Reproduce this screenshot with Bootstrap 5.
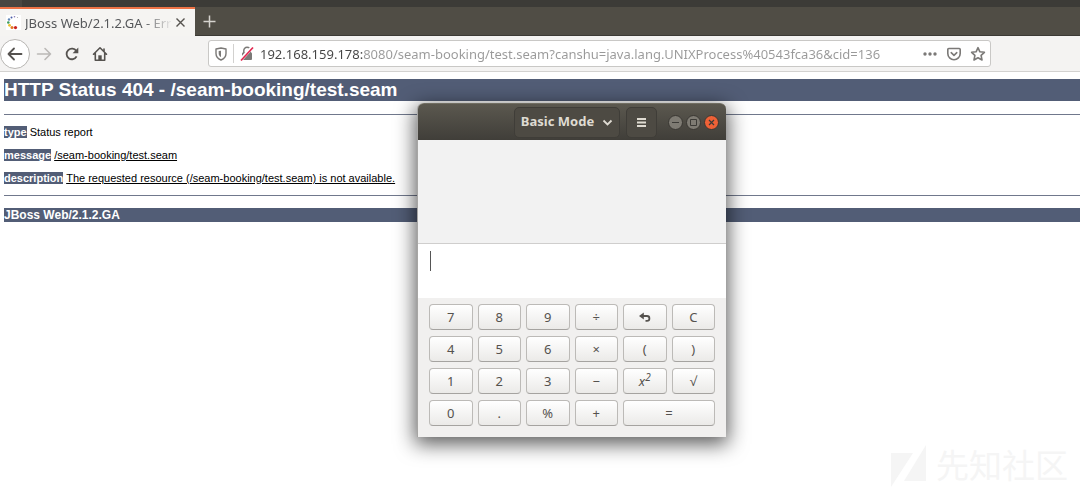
<!DOCTYPE html>
<html lang="en">
<head>
<meta charset="utf-8">
<meta name="viewport" content="width=device-width, initial-scale=1">
<title>JBoss Web/2.1.2.GA - Error report</title>
<link href="https://cdn.jsdelivr.net/npm/bootstrap@5.3.0/dist/css/bootstrap.min.css" rel="stylesheet">
<style>
  body { background: #fff; font-family: "Noto Sans", "Open Sans", sans-serif; font-size: 13px; overflow-x: hidden; min-height: 100vh; }
  svg { display: block; flex: none; }
  button { padding: 0; border: 0; background: none; color: inherit; display: flex; align-items: center; justify-content: center; }

  .topbar { height: 7px; background: linear-gradient(90deg, #484641 22px, #3c3b37 22px); }
  .tabstrip { height: 29px; background: #504d45; border-bottom: 1px solid #3c3a35; }
  .page-tab { width: 195px; height: 29px; background: #f5f4f2; border-top: 2px solid #ee7346; padding: 0 9px 0 6px; color: #55575a; line-height: 20px; }
  .tab-title { white-space: nowrap; -webkit-mask-image: linear-gradient(90deg, #000 118px, transparent 148px); mask-image: linear-gradient(90deg, #000 118px, transparent 148px); }
  .new-tab { width: 29px; color: #d5d3ce; }

  .toolbar { height: 36px; background: #f4f3f2; border-bottom: 1px solid #d3d2d0; color: #55524f; }
  .back { width: 30px; height: 30px; border: 1px solid #b8b6b3; border-radius: 50%; background: #fff; }
  .tool { width: 28px; height: 28px; }
  .address { width: 72.5%; height: 27px; margin-left: 94px; background: #fff; border: 1px solid #c9c8c6; border-radius: 3px; color: #7b7977; }
  .split { width: 1px; height: 19px; background: #d2d1cf; }
  .url { border: 0; outline: 0; padding: 0; min-width: 0; height: 20px; color: #999; font-size: 13px;
    background: linear-gradient(90deg, #444 103px, #999 103px); -webkit-background-clip: text; background-clip: text; -webkit-text-fill-color: transparent; }

  .report { font-family: "Liberation Sans", Arial, sans-serif; font-size: 11px; line-height: 12px; color: #000; padding: 7px 0 0 4px; }
  .report h1, .report h2, .report b { color: #fff; background: #525d76; font-weight: 700; }
  .report h1 { font-size: 19px; line-height: 22px; margin: 0 0 13px; }
  .report h2 { font-size: 12px; line-height: 14px; margin: 0; }
  .report hr { margin: 0 0 11px; border: 0; height: 1px; background: #70788c; opacity: 1; }
  .report p { margin: 0 0 11px; }
  .report .last-rule { margin-bottom: 12px; }

  .calc { position: absolute; left: 417px; top: 103px; width: 309px; border-radius: 6px 6px 0 0; background: #f1f0ef; border: solid #a7a6a4; border-width: 0 0 0 1px; box-shadow: 0 5px 20px 2px rgba(0,0,0,.65); }
  .calc-head { height: 37px; padding-right: 7px; background: linear-gradient(#5b584f, #403e39); border-top: 1px solid #716e62; border-radius: 6px 6px 0 0; color: #dfdbd2; }
  .calc-head .mode, .calc-head .menu { height: 31px; border: 1px solid #3f3d38; border-radius: 5px; background: #4d4a43; font-weight: 700; font-size: 13px; }
  .mode { width: 106px; gap: 8px; }
  .menu { width: 31px; margin: 0 11px 0 6px; }
  .window-buttons { gap: 3px; }
  .win { width: 15px; height: 15px; border-radius: 50%; background: #7e7b73; border: 1px solid #393732; color: #3c3b37; }
  .win.close-win { background: #ee6136; }
  .history { height: 104px; background: #f2f2f2; border-bottom: 1px solid #cfcecd; }
  .entry { height: 54px; background: #fff; padding: 7px 12px; }
  .caret { width: 1px; height: 20px; background: #555; }
  .entry input { border: 0; outline: 0; padding: 0; height: 20px; min-width: 0; background: none; }
  .keys { display: grid; grid-template-columns: repeat(6, 1fr); gap: 6px 5px; padding: 6px 11px 11px; }
  .keys button { height: 26px; border: 1px solid #bcbab7; border-bottom-color: #a5a3a0; border-radius: 4px; background: linear-gradient(#fff, #ebeae8); color: #55524e; font-size: 13px; line-height: 20px; }
  .keys sup { font-size: 10px; top: -5px; }
  .keys .wide-key { grid-column: span 2; }

  .watermark { position: absolute; right: 12px; bottom: 3px; gap: 10px; color: #f5f5f5; font-family: "Noto Sans", "Noto Sans CJK SC", sans-serif; font-size: 33px; line-height: 40px; }
</style>
<script src="https://cdn.jsdelivr.net/npm/bootstrap@5.3.0/dist/js/bootstrap.bundle.min.js"></script>
</head>
<body class="position-relative">
<header>
  <div class="topbar"></div>
  <div class="tabstrip d-flex">
    <div class="page-tab d-flex align-items-center">
      <svg class="me-1" width="15" height="15" viewBox="0 0 15 15"><rect width="15" height="15" fill="#fff"/><g><circle cx="8.500" cy="1.800" r=".8" fill="#8a78b5"/><circle cx="5.500" cy="2.500" r="1" fill="#4a5da8"/><circle cx="3" cy="4.500" r="1.200" fill="#6288b8"/><circle cx="2.300" cy="7.500" r="1.300" fill="#3b9b5b"/><circle cx="3.500" cy="10.300" r="1.400" fill="#e8c22c"/><circle cx="6" cy="12.400" r="1.500" fill="#e57726"/><circle cx="9.500" cy="12.600" r="1.600" fill="#c9211e"/><circle cx="11.500" cy="2.500" r=".6" fill="#aaa"/></g></svg>
      <div class="tab-title">JBoss Web/2.1.2.GA - Err</div>
      <button type="button" class="ms-auto" aria-label="Close tab"><svg width="11" height="11" viewBox="0 0 11 11" stroke="#56534f" stroke-width="1.400"><path d="M1.500 1.500l8 8M9.500 1.500l-8 8"/></svg></button>
    </div>
    <button type="button" class="new-tab" aria-label="New tab"><svg width="13" height="13" viewBox="0 0 13 13" stroke="currentColor" stroke-width="1.500"><path d="M6.500 .5v12M.5 6.500h12"/></svg></button>
  </div>
  <nav class="toolbar d-flex align-items-center">
    <button type="button" class="back" aria-label="Back"><svg width="16" height="16" viewBox="0 0 16 16" fill="none" stroke="currentColor" stroke-width="1.800" stroke-linecap="round" stroke-linejoin="round"><path d="M14.500 8H1.500M7 2.500L1.500 8 7 13.500"/></svg></button>
    <button type="button" class="tool" aria-label="Forward"><svg width="16" height="16" viewBox="0 0 16 16" fill="none" stroke="#bbb9b7" stroke-width="1.600" stroke-linecap="round" stroke-linejoin="round"><path d="M1.500 8h13M9 2.500L14.500 8 9 13.500"/></svg></button>
    <button type="button" class="tool" aria-label="Reload"><svg width="16" height="16" viewBox="0 0 16 16" fill="none" stroke="currentColor" stroke-width="1.800"><path d="M12.600 10.400A5.300 5.300 0 1 1 12.300 5"/><path d="M14.300 1.500v5.700H8.600z" fill="currentColor" stroke="none"/></svg></button>
    <button type="button" class="tool" aria-label="Home"><svg width="16" height="16" viewBox="0 0 16 16" fill="none" stroke="currentColor" stroke-width="1.600" stroke-linejoin="round" stroke-linecap="round"><path d="M1.500 8.200L8 1.800l6.500 6.400M3.300 7.500v6.700h9.400V7.500"/><path d="M6.300 14V9.300h3.400V14z" fill="currentColor" stroke="none"/><path d="M12 3v2"/></svg></button>
    <div class="address d-flex align-items-center">
      <svg class="mx-1" width="16" height="16" viewBox="0 0 16 16" fill="none" stroke="currentColor" stroke-width="1.400" stroke-linejoin="round"><path d="M8 2l5 1v4.500c0 3-2 5.300-5 6.500-3-1.200-5-3.500-5-6.500V3z"/><path d="M8 4.700v6.400c-1.600-1-2.300-2.200-2.300-3.700V5.100z" fill="currentColor" stroke="none"/></svg>
      <div class="split"></div>
      <svg class="mx-1" width="18" height="16" viewBox="0 0 18 16"><path d="M5.800 7V4.500a3.200 3.200 0 0 1 6.400 0V7" fill="none" stroke="#7b7977" stroke-width="1.500"/><rect x="4" y="6.500" width="10" height="7.500" rx="1" fill="#7b7977"/><path d="M3.500 13L14 1.500" stroke="#fff" stroke-width="3.500"/><path d="M3 14.500L15 1.500" stroke="#e22850" stroke-width="1.700"/></svg>
      <input class="url flex-grow-1" type="text" aria-label="Address" value="192.168.159.178:8080/seam-booking/test.seam?canshu=java.lang.UNIXProcess%40543fca36&amp;cid=136">
      <div class="d-flex align-items-center gap-2 pe-1">
        <button type="button" aria-label="Page actions"><svg width="16" height="16" viewBox="0 0 16 16" fill="currentColor"><circle cx="3" cy="8" r="1.700"/><circle cx="8" cy="8" r="1.700"/><circle cx="13" cy="8" r="1.700"/></svg></button>
        <button type="button" aria-label="Save to Pocket"><svg width="16" height="16" viewBox="0 0 16 16" fill="none" stroke="currentColor" stroke-width="1.600" stroke-linecap="round" stroke-linejoin="round"><path d="M2.800 2.500h10.400a1 1 0 0 1 1 1v4a6.200 6.200 0 0 1-12.400 0v-4a1 1 0 0 1 1-1z"/><path d="M5.200 6.700L8 9.300l2.800-2.600"/></svg></button>
        <button type="button" aria-label="Bookmark"><svg width="16" height="16" viewBox="0 0 16 16" fill="none" stroke="currentColor" stroke-width="1.600" stroke-linejoin="round"><path d="M8 1.700l1.900 4.100 4.500.5-3.300 3.100.9 4.600L8 11.800 4 14l.9-4.600L1.600 6.300l4.500-.5z"/></svg></button>
      </div>
    </div>
  </nav>
</header>

<main class="report">
  <h1>HTTP Status 404 - /seam-booking/test.seam</h1>
  <hr>
  <p><b>type</b> Status report</p>
  <p><b>message</b> <u>/seam-booking/test.seam</u></p>
  <p><b>description</b> <u>The requested resource (/seam-booking/test.seam) is not available.</u></p>
  <hr class="last-rule">
  <h2>JBoss Web/2.1.2.GA</h2>
</main>

<section class="calc" aria-label="Calculator">
  <div class="calc-head d-flex align-items-center justify-content-end">
    <button type="button" class="mode">Basic Mode <svg width="11" height="11" viewBox="0 0 11 11" fill="none" stroke="currentColor" stroke-width="1.800"><path d="M1.500 3.500l4 4 4-4"/></svg></button>
    <button type="button" class="menu" aria-label="Menu"><svg width="9" height="9" viewBox="0 0 9 9" stroke="currentColor" stroke-width="2"><path d="M0 1h9M0 4.500h9M0 8h9"/></svg></button>
    <div class="window-buttons d-flex">
      <button type="button" class="win" aria-label="Minimize"><svg width="9" height="9" viewBox="0 0 9 9" stroke="currentColor"><path d="M1 4.500h7"/></svg></button>
      <button type="button" class="win" aria-label="Maximize"><svg width="9" height="9" viewBox="0 0 9 9" fill="none" stroke="currentColor"><path d="M1.500 1.500h6v6h-6z"/></svg></button>
      <button type="button" class="win close-win" aria-label="Close"><svg width="9" height="9" viewBox="0 0 9 9" stroke="currentColor" stroke-width="1.200"><path d="M2 2l5 5M7 2l-5 5"/></svg></button>
    </div>
  </div>
  <div class="history"></div>
  <div class="entry d-flex"><span class="caret"></span><input class="flex-grow-1" type="text" aria-label="Expression"></div>
  <div class="keys">
    <button type="button">7</button><button type="button">8</button><button type="button">9</button><button type="button">÷</button>
    <button type="button" aria-label="Undo"><svg width="12" height="10" viewBox="0 0 12 10" fill="none" stroke="currentColor" stroke-width="1.800"><path d="M2.500 4H8a2.400 2.400 0 0 1 0 4.800H6.500"/><path d="M4.800 .5L0 4l4.800 3.500z" fill="currentColor" stroke="none"/></svg></button>
    <button type="button">C</button>
    <button type="button">4</button><button type="button">5</button><button type="button">6</button><button type="button">×</button><button type="button">(</button><button type="button">)</button>
    <button type="button">1</button><button type="button">2</button><button type="button">3</button><button type="button">−</button><button type="button"><i>x<sup>2</sup></i></button><button type="button">√</button>
    <button type="button">0</button><button type="button">.</button><button type="button">%</button><button type="button">+</button><button type="button" class="wide-key">=</button>
  </div>
</section>

<div class="watermark d-flex align-items-center">
  <svg width="35" height="42" viewBox="0 0 35 42" fill="currentColor"><path d="M0 8h22L0 42zM35 0v36H13z"/></svg>
  <span>先知社区</span>
</div>
</body>
</html>
